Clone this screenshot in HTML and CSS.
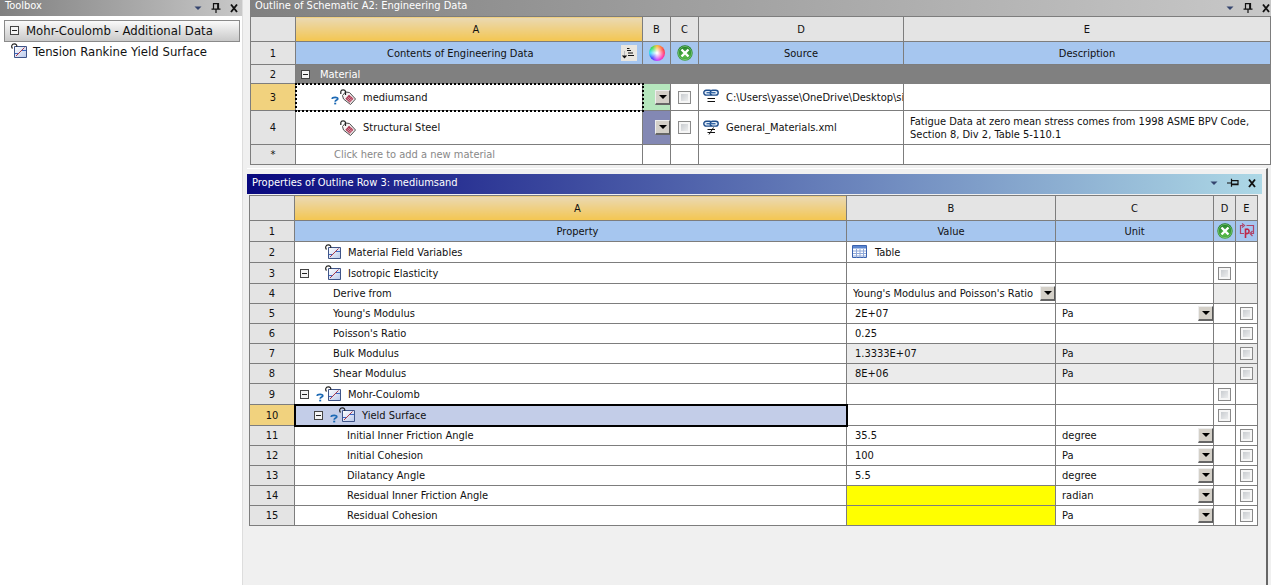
FILE: index.html
```html
<!DOCTYPE html>
<html lang="en">
<head>
<meta charset="UTF-8">
<meta name="viewport" content="width=device-width, initial-scale=1.0">
<title>Engineering Data</title>
<link rel="stylesheet" href="styles.css">
</head>
<body>
<svg class="defs" aria-hidden="true">
  <defs>
    <linearGradient id="paper" x1="0" y1="0" x2="1" y2="1">
      <stop offset="0" stop-color="#ffffff"/>
      <stop offset="1" stop-color="#b9c8ea"/>
    </linearGradient>
    <radialGradient id="green" cx="0.5" cy="0.7" r="0.7">
      <stop offset="0" stop-color="#5cc04a"/>
      <stop offset="1" stop-color="#1d7a28"/>
    </radialGradient>
  </defs>
  <symbol id="i-prop" viewBox="0 0 16 16">
    <path d="M3.500 3.500h12v11h-12z" fill="url(#paper)" stroke="#3f5488"/>
    <path d="M4 10.500h3.500l3-3h4.500" fill="none" stroke="#3a66c4"/>
    <path d="M5 13l8.500-8.500" fill="none" stroke="#a8384a"/>
    <path d="M1.500 5.500C-.2 3.500 1 .8 3.200.8s3 1.500 2.300 3" fill="none" stroke="#222" stroke-width="1.200"/>
  </symbol>
  <symbol id="i-tag" viewBox="0 0 16 16">
    <path d="M2.500 6.500L5.500 3l4 .5 6 6.500-5 5.500-7-5.500z" fill="#f6f2f2" stroke="#4a4a4a"/>
    <path d="M9 5.800l4.500 4-3.600 4-4.600-4z" fill="#ab3350"/>
    <path d="M7.500 7.500l4.500 4.200M6.500 8.800l4.300 4M7.500 11.500l3.800-4.200M9 12.700l3.700-4" stroke="#e3b3bc" stroke-width=".6"/>
    <path d="M5.500 6V2.500C5 .2 1.200.2.800 2.500v2.500" fill="none" stroke="#222" stroke-width="1.200"/>
  </symbol>
  <symbol id="i-ask" viewBox="0 0 9 9">
    <path d="M1 2.900C1.500.9 7 .7 6.800 2.800 6.600 4.300 4.300 3.800 4.200 5.800" fill="none" stroke="#1c69b4" stroke-width="1.700"/>
    <path d="M3.200 6.700h2v1.700h-2z" fill="#1c69b4"/>
  </symbol>
  <symbol id="i-off" viewBox="0 0 16 16">
    <circle cx="8" cy="8" r="7.700" fill="url(#green)"/>
    <circle cx="8" cy="8" r="6.600" fill="none" stroke="#8fd487" stroke-width=".6"/>
    <path d="M4.500 4.500l7 7M11.500 4.500l-7 7" stroke="#fff" stroke-width="2.400"/>
  </symbol>
  <symbol id="i-eq" viewBox="0 0 16 16">
    <rect x=".8" y="1.300" width="8" height="4.800" rx="2.400" fill="#e4eef9" stroke="#1f4e8c" stroke-width="1.400"/>
    <rect x="7.200" y="1.300" width="8" height="4.800" rx="2.400" fill="#e4eef9" stroke="#1f4e8c" stroke-width="1.400"/>
    <path d="M3.500 3.700h9" stroke="#2f62a4" stroke-width="1.300"/>
    <path d="M4.500 9.500h7.500M4.500 12.500h7.500" stroke="#111" stroke-width="1.200"/>
  </symbol>
  <symbol id="i-neq" viewBox="0 0 16 16">
    <use href="#i-eq"/>
    <path d="M10.500 7.500l-4.500 7" stroke="#111"/>
  </symbol>
  <symbol id="i-table" viewBox="0 0 16 14">
    <path d="M.5.5h14v12H.5z" fill="#fff" stroke="#3a62ae"/>
    <path d="M1 1h13v2.500H1z" fill="#5b86d0"/>
    <path d="M1 6h13M1 8.500h13M1 11h13M4.500 4v8.500M8 4v8.500M11.500 4v8.500" stroke="#8fa8d8"/>
  </symbol>
  <symbol id="i-param" viewBox="0 0 16 16">
    <path d="M4 2.500H1.500v8H5M3 .5l2.500 2L3 4.500M7.500 2.500h7v8H12M13.500 8l-2.500 2.500 2.500 2.500" fill="none" stroke="#b04468" stroke-width="1.200"/>
    <path d="M6.500 15V5.500M6.500 6.500c4.500-2 5 5 0 4" fill="none" stroke="#c02848" stroke-width="1.600"/>
  </symbol>
  <symbol id="i-sort" viewBox="0 0 16 16">
    <path d="M0 0h16v16H0z" fill="#e9e6e0"/>
    <path d="M6 3.500h2.500M6 5.500h4M7 8h5M7 10.500h6" stroke="#111" stroke-width="1.200"/>
    <path d="M3.500 6v5" stroke="#bbb"/>
    <path d="M.8 10.500h5.400L3.500 13.500z" fill="#111"/>
  </symbol>
  <symbol id="i-menu" viewBox="0 0 10 10">
    <path d="M1.500 3.500h7L5 7z" fill="#35456f"/>
  </symbol>
  <symbol id="i-pin" viewBox="0 0 10 10">
    <path d="M2.500 6V.7h5V6M.5 6.200h9M5 6v4M6.700 1v5" fill="none" stroke="#111" stroke-width="1.200"/>
  </symbol>
  <symbol id="i-pin-side" viewBox="0 0 12 10">
    <path d="M5 2.700h6v4H5M4.500.8v8M0 5h4M5 6h6" fill="none" stroke="#111" stroke-width="1.200"/>
  </symbol>
  <symbol id="i-close" viewBox="0 0 10 10">
    <path d="M2 1.500l6 7.500M8 1.500L2 9" stroke="#111" stroke-width="1.900"/>
  </symbol>
</svg>

<aside class="toolbox">
  <header class="title-bar cut">
    <h2>Toolbox</h2>
    <div class="tools">
      <button type="button" aria-label="Menu"><svg><use href="#i-menu"/></svg></button>
      <button type="button" aria-label="Pin"><svg><use href="#i-pin"/></svg></button>
      <button type="button" aria-label="Close"><svg><use href="#i-close"/></svg></button>
    </div>
  </header>
  <button type="button" class="group"><span class="toggle"></span>Mohr-Coulomb - Additional Data</button>
  <a class="tool-item" href="#"><svg class="icon"><use href="#i-prop"/></svg>Tension Rankine Yield Surface</a>
</aside>

<main>
  <section class="outline">
    <header class="title-bar cut">
      <h2>Outline of Schematic A2: Engineering Data</h2>
      <div class="tools">
        <button type="button" aria-label="Menu"><svg><use href="#i-menu"/></svg></button>
        <button type="button" aria-label="Pin"><svg><use href="#i-pin"/></svg></button>
        <button type="button" aria-label="Close"><svg><use href="#i-close"/></svg></button>
      </div>
    </header>
    <table>
      <colgroup><col class="c-num"><col class="c-contents"><col class="c-mark"><col class="c-mark"><col class="c-source"><col></colgroup>
      <thead>
        <tr class="letters"><th></th><th class="active">A</th><th>B</th><th>C</th><th>D</th><th>E</th></tr>
        <tr class="names tall">
          <th>1</th>
          <td><div class="sortable">Contents of Engineering Data<svg class="icon"><use href="#i-sort"/></svg></div></td>
          <td><span class="wheel"></span></td>
          <td><svg class="icon"><use href="#i-off"/></svg></td>
          <td>Source</td>
          <td>Description</td>
        </tr>
      </thead>
      <tbody>
        <tr class="section-row">
          <th>2</th>
          <td colspan="5"><div class="cell"><button type="button" class="toggle" aria-label="Collapse"></button><span>Material</span></div></td>
        </tr>
        <tr class="row-medium">
          <th class="active-row">3</th>
          <td class="focused"><div class="cell level2"><span class="slot"></span><svg class="ask"><use href="#i-ask"/></svg><svg class="icon"><use href="#i-tag"/></svg><span>mediumsand</span></div></td>
          <td class="mark green"><div class="drop"><select aria-label="Colour of mediumsand"><option></option></select><i></i></div></td>
          <td class="check"><input type="checkbox" aria-label="Suppress mediumsand"></td>
          <td><div class="source"><svg class="icon"><use href="#i-eq"/></svg><span>C:\Users\yasse\OneDrive\Desktop\si</span></div></td>
          <td></td>
        </tr>
        <tr class="row-large">
          <th>4</th>
          <td><div class="cell level2"><span class="slot"></span><span class="ask"></span><svg class="icon"><use href="#i-tag"/></svg><span>Structural Steel</span></div></td>
          <td class="mark violet"><div class="drop"><select aria-label="Colour of Structural Steel"><option></option></select><i></i></div></td>
          <td class="check"><input type="checkbox" aria-label="Suppress Structural Steel"></td>
          <td><div class="source"><svg class="icon"><use href="#i-neq"/></svg><span>General_Materials.xml</span></div></td>
          <td class="description">Fatigue Data at zero mean stress comes from 1998 ASME BPV Code,<br>Section 8, Div 2, Table 5-110.1</td>
        </tr>
        <tr>
          <th>*</th><td class="hint">Click here to add a new material</td><td></td><td></td><td></td><td></td>
        </tr>
      </tbody>
    </table>
  </section>

  <section class="properties">
    <header class="title-bar blue">
      <h2>Properties of Outline Row 3: mediumsand</h2>
      <div class="tools">
        <button type="button" aria-label="Menu"><svg><use href="#i-menu"/></svg></button>
        <button type="button" aria-label="Pin"><svg class="wide"><use href="#i-pin-side"/></svg></button>
        <button type="button" aria-label="Close"><svg><use href="#i-close"/></svg></button>
      </div>
    </header>
    <table>
      <colgroup><col class="c-num"><col><col class="c-value"><col class="c-unit"><col class="c-flag"><col class="c-flag"></colgroup>
      <thead>
        <tr class="letters"><th></th><th class="active">A</th><th>B</th><th>C</th><th>D</th><th>E</th></tr>
        <tr class="names parent">
          <th>1</th><td class="main-name">Property</td><td>Value</td><td>Unit</td>
          <td><svg class="icon"><use href="#i-off"/></svg></td>
          <td><svg class="icon"><use href="#i-param"/></svg></td>
        </tr>
      </thead>
      <tbody>
        <tr class="parent">
          <th>2</th>
          <td><div class="cell"><span class="slot"></span><span class="ask"></span><svg class="icon"><use href="#i-prop"/></svg><span>Material Field Variables</span></div></td>
          <td><div class="table-link"><svg class="icon"><use href="#i-table"/></svg>Table</div></td>
          <td></td><td></td><td></td>
        </tr>
        <tr class="parent">
          <th>3</th>
          <td><div class="cell"><button type="button" class="toggle" aria-label="Collapse"></button><span class="ask"></span><svg class="icon"><use href="#i-prop"/></svg><span>Isotropic Elasticity</span></div></td>
          <td></td><td></td>
          <td class="check"><input type="checkbox" aria-label="Suppress Isotropic Elasticity"></td><td></td>
        </tr>
        <tr>
          <th>4</th><td class="leaf">Derive from</td>
          <td><div class="drop"><select aria-label="Derive from"><option>Young's Modulus and Poisson's Ratio</option></select><i></i></div></td>
          <td></td><td class="off"></td><td class="off"></td>
        </tr>
        <tr>
          <th>5</th><td class="leaf">Young's Modulus</td><td class="value">2E+07</td>
          <td><div class="drop"><select aria-label="Young's Modulus unit"><option>Pa</option></select><i></i></div></td>
          <td></td><td class="check"><input type="checkbox" aria-label="Parameterize Young's Modulus"></td>
        </tr>
        <tr>
          <th>6</th><td class="leaf">Poisson's Ratio</td><td class="value">0.25</td><td></td>
          <td></td><td class="check"><input type="checkbox" aria-label="Parameterize Poisson's Ratio"></td>
        </tr>
        <tr>
          <th>7</th><td class="leaf">Bulk Modulus</td><td class="value off">1.3333E+07</td><td class="unit off">Pa</td>
          <td class="off"></td><td class="check off"><input type="checkbox" aria-label="Parameterize Bulk Modulus"></td>
        </tr>
        <tr>
          <th>8</th><td class="leaf">Shear Modulus</td><td class="value off">8E+06</td><td class="unit off">Pa</td>
          <td class="off"></td><td class="check off"><input type="checkbox" aria-label="Parameterize Shear Modulus"></td>
        </tr>
        <tr class="parent">
          <th>9</th>
          <td><div class="cell"><button type="button" class="toggle" aria-label="Collapse"></button><svg class="ask"><use href="#i-ask"/></svg><svg class="icon"><use href="#i-prop"/></svg><span>Mohr-Coulomb</span></div></td>
          <td></td><td></td>
          <td class="check"><input type="checkbox" aria-label="Suppress Mohr-Coulomb"></td><td></td>
        </tr>
        <tr class="parent">
          <th class="active-row">10</th>
          <td class="selected"><div class="cell level2"><button type="button" class="toggle" aria-label="Collapse"></button><svg class="ask"><use href="#i-ask"/></svg><svg class="icon"><use href="#i-prop"/></svg><span>Yield Surface</span></div></td>
          <td></td><td></td>
          <td class="check"><input type="checkbox" aria-label="Suppress Yield Surface"></td><td></td>
        </tr>
        <tr>
          <th>11</th><td class="leaf deep">Initial Inner Friction Angle</td><td class="value">35.5</td>
          <td><div class="drop"><select aria-label="Initial Inner Friction Angle unit"><option>degree</option></select><i></i></div></td>
          <td></td><td class="check"><input type="checkbox" aria-label="Parameterize Initial Inner Friction Angle"></td>
        </tr>
        <tr>
          <th>12</th><td class="leaf deep">Initial Cohesion</td><td class="value">100</td>
          <td><div class="drop"><select aria-label="Initial Cohesion unit"><option>Pa</option></select><i></i></div></td>
          <td></td><td class="check"><input type="checkbox" aria-label="Parameterize Initial Cohesion"></td>
        </tr>
        <tr>
          <th>13</th><td class="leaf deep">Dilatancy Angle</td><td class="value">5.5</td>
          <td><div class="drop"><select aria-label="Dilatancy Angle unit"><option>degree</option></select><i></i></div></td>
          <td></td><td class="check"><input type="checkbox" aria-label="Parameterize Dilatancy Angle"></td>
        </tr>
        <tr>
          <th>14</th><td class="leaf deep">Residual Inner Friction Angle</td><td class="missing"></td>
          <td><div class="drop"><select aria-label="Residual Inner Friction Angle unit"><option>radian</option></select><i></i></div></td>
          <td></td><td class="check"><input type="checkbox" aria-label="Parameterize Residual Inner Friction Angle"></td>
        </tr>
        <tr>
          <th>15</th><td class="leaf deep">Residual Cohesion</td><td class="missing"></td>
          <td><div class="drop"><select aria-label="Residual Cohesion unit"><option>Pa</option></select><i></i></div></td>
          <td></td><td class="check"><input type="checkbox" aria-label="Parameterize Residual Cohesion"></td>
        </tr>
      </tbody>
    </table>
  </section>
</main>
</body>
</html>
```
FILE: styles.css
```css
* {
  box-sizing: border-box;
}
body {
  margin: 0;
  display: flex;
  gap: 4px;
  min-height: 100vh;
  background: #f0f0f0;
  color: #111;
  font: 11px/13px "DejaVu Sans Condensed", "DejaVu Sans", sans-serif;
  overflow-x: hidden;
}
button,
select {
  font: inherit;
  color: inherit;
}
svg {
  display: block;
}
.defs {
  position: absolute;
  width: 0;
  height: 0;
}
.icon {
  width: 16px;
  height: 16px;
  flex: none;
}

/* title bars */
.title-bar {
  display: flex;
  justify-content: space-between;
  align-items: center;
  height: 20px;
  padding: 0 5px;
  color: #fff;
  background: linear-gradient(to right, #808080, #c8c8c8);
}
.title-bar.cut {
  height: 16px;
}
.title-bar.cut h2 {
  padding-bottom: 5px;
}
.title-bar.blue {
  padding-bottom: 3px;
  background: linear-gradient(to right, #08087e, #add8e6);
}
.title-bar h2 {
  margin: 0;
  font-size: 11px;
  font-weight: normal;
}
.tools {
  display: flex;
  gap: 8px;
}
.tools button {
  padding: 0;
  border: 0;
  background: none;
}
.tools svg {
  width: 10px;
  height: 10px;
}
.tools .wide {
  width: 12px;
}

/* toolbox */
.toolbox {
  flex: none;
  width: 243px;
  background: #fff;
  border-right: 1px solid #ddd;
}
.toolbox .title-bar {
  padding-right: 3px;
}
.group {
  display: flex;
  align-items: center;
  gap: 7px;
  width: 236px;
  height: 22px;
  margin: 4px 4px 0;
  padding: 0 5px 2px;
  border: 1px solid #8a8a8a;
  background: linear-gradient(#fafafa, #c9c9c9);
  font-size: 13px;
}
.tool-item {
  display: flex;
  align-items: center;
  gap: 6px;
  height: 18px;
  padding-left: 11px;
  color: inherit;
  font-size: 13px;
  text-decoration: none;
}

main {
  flex: 1;
  min-width: 0;
  display: flex;
  flex-direction: column;
}

/* grids */
table {
  width: 100%;
  table-layout: fixed;
  border-collapse: collapse;
  background: #fff;
}
th,
td {
  height: 20px;
  padding: 0;
  border: 1px solid #7d7d7d;
  font-weight: normal;
  text-align: left;
}
th {
  background: #e4e4e4;
  text-align: center;
}
.c-num { width: 45px; }
.c-contents { width: 347px; }
.c-mark { width: 28px; }
.c-source { width: 205px; }
.c-value { width: 209px; }
.c-unit { width: 158px; }
.c-flag { width: 22px; }

.letters th {
  height: 25px;
}
.letters .active {
  padding-left: 14px;
  background: linear-gradient(#ead9b4, #f4c650);
}
.names td {
  background: #a6c6ef;
  text-align: center;
}
.names .main-name {
  padding-left: 14px;
}
.names .icon {
  margin: 0 auto;
}
.tall > * {
  height: 23px;
}
.parent > * {
  height: 21px;
}
.row-medium > * {
  height: 27px;
}
.row-large > * {
  height: 34px;
}
.active-row {
  background: #f1d27e;
}
.sortable {
  display: flex;
  align-items: center;
  padding: 0 5px 0 91px;
}
.names .sortable .icon {
  margin: 0 0 0 auto;
}
.wheel {
  display: block;
  width: 16px;
  height: 16px;
  margin: 0 auto;
  border-radius: 50%;
  background: radial-gradient(#fff 5%, transparent 65%), conic-gradient(#fb3, #f44 17%, #f3a 35%, #c4f 50%, #44f 62%, #3df 75%, #3d5 88%, #fb3);
}
.section-row > * {
  height: 19px;
}
.section-row td {
  background: #808080;
  border-color: #808080;
  color: #fff;
}
.section-row .toggle {
  margin-right: 10px;
}

/* tree cells */
.cell {
  display: flex;
  align-items: center;
  padding-left: 5px;
}
.cell.level2 {
  padding-left: 19px;
}
.slot,
.toggle {
  flex: none;
  width: 9px;
  height: 9px;
}
.toggle {
  padding: 0;
  border: 1px solid #444;
  background: linear-gradient(#222, #222) center / 5px 1px no-repeat #f4f4f4;
}
.cell .ask {
  flex: none;
  width: 9px;
  height: 9px;
  margin: 6px 0 0 7px;
}
.cell .icon {
  margin-right: 7px;
}
.leaf {
  padding-left: 38px;
}
.leaf.deep {
  padding-left: 52px;
}
.hint {
  padding-left: 38px;
  color: #888;
}
.focused {
  outline: 2px dotted #000;
  outline-offset: -1px;
}
.selected {
  background: #c3cde8;
  outline: 2px solid #000;
  outline-offset: -1px;
}
.source {
  display: flex;
  align-items: center;
  gap: 7px;
  padding-left: 4px;
  overflow: hidden;
  white-space: nowrap;
}
.description {
  padding-left: 6px;
}
.table-link {
  display: flex;
  align-items: center;
  gap: 7px;
  padding-left: 5px;
}
.value {
  padding-left: 8px;
}
.unit {
  padding-left: 6px;
}
.off {
  background: #ebebeb;
}
.missing {
  background: #ff0;
}
.green {
  background: #b5e6bd;
}
.violet {
  background: #8388b4;
}

/* controls */
.drop {
  position: relative;
  height: 17px;
}
.drop select {
  appearance: none;
  width: 100%;
  height: 17px;
  padding: 0 18px 0 6px;
  border: 0;
  background: none;
}
.drop i {
  position: absolute;
  top: 1px;
  right: 0;
  width: 15px;
  height: 15px;
  border: 1px solid #eee;
  border-right-color: #555;
  border-bottom: 2px solid #666;
  background: #d4d0c8;
  pointer-events: none;
}
.drop i::after {
  content: "";
  position: absolute;
  top: 4px;
  left: 3px;
  border: 4px solid transparent;
  border-top-color: #000;
  border-bottom: 0;
}
.check {
  text-align: center;
}
input[type="checkbox"] {
  appearance: none;
  display: block;
  width: 13px;
  height: 13px;
  margin: 0 auto;
  border: 1px solid #8a8a8a;
  box-shadow: inset 0 0 0 2px #f6f6f6;
  background: linear-gradient(135deg, #bfc3c8, #f6f6f6);
}

/* panels */
.outline {
  padding: 0 0 3px 3px;
}
.outline .title-bar {
  padding-right: 0;
}
.properties {
  flex: 1;
  margin-right: 3px;
  padding: 5px 4px 0 0;
  border-top: 1px solid #fff;
  border-right: 2px solid #666;
}
.properties table {
  width: calc(100% - 6px);
  margin: 1px 4px 0 2px;
}
```
